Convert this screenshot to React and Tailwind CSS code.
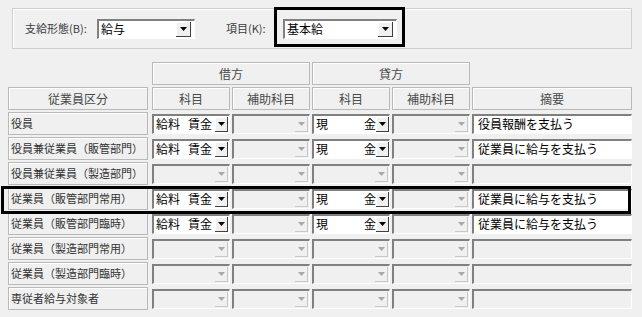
import clsx from "clsx";

const rows = [
    { label: "役員", debit: "給料賃金", credit: "現金", memo: "役員報酬を支払う" },
    { label: "役員兼従業員（販管部門）", debit: "給料賃金", credit: "現金", memo: "従業員に給与を支払う" },
    { label: "役員兼従業員（製造部門）" },
    { label: "従業員（販管部門常用）", debit: "給料賃金", credit: "現金", memo: "従業員に給与を支払う" },
    { label: "従業員（販管部門臨時）", debit: "給料賃金", credit: "現金", memo: "従業員に給与を支払う" },
    { label: "従業員（製造部門常用）" },
    { label: "従業員（製造部門臨時）" },
    { label: "専従者給与対象者" },
];

// ▼ ボタン
function Arrow({ disabled, big }) {
    return (
        <span
            className={clsx(
                "flex items-center justify-center shrink-0",
                big ? "w-[15px] h-[15px] mr-[2px]" : "w-[13px] h-[15px]",
                disabled
                    ? "border-r border-b border-[#c8c8c8]"
                    : "bg-[#f0f0f0] border-r border-b border-[#404040] shadow-[inset_1px_1px_0_#ffffff]"
            )}
        >
            <svg width="7" height="4" viewBox="0 0 7 4">
                <path d="M0 0h7L3.5 4z" fill={disabled ? "#a8a8a8" : "#000"} />
            </svg>
        </span>
    );
}

function Combo({ children, disabled, big, className }) {
    return (
        <div
            className={clsx(
                "flex items-center h-[20px] border-l-2 border-t-2 border-l-[#808080] border-t-[#808080] border-r border-b border-r-[#ffffff] border-b-[#ffffff] pl-[2px] pr-[1px]",
                disabled ? "bg-[#f0f0f0]" : "bg-white",
                className
            )}
        >
            <div className="flex-1 flex items-center text-black leading-none whitespace-pre">{children}</div>
            <Arrow disabled={disabled} big={big} />
        </div>
    );
}

function HeadCell({ children, className }) {
    return (
        <div
            className={clsx(
                "h-[23px] flex items-center justify-center bg-[#f0f0f0] border border-[#b9b9b9] shadow-[inset_1px_1px_0_#ffffff] text-[#4a4a4a]",
                className
            )}
        >
            {children}
        </div>
    );
}

export default function App() {
    return (
        <div className="relative w-[642px] h-[317px] overflow-hidden bg-[#f0f0f0] text-[12px] font-['Noto_Sans_CJK_JP','Noto_Sans_CJK_SC',sans-serif]">
            {/* 上部 */}
            <div className="ml-[12px] mt-[8px] w-[620px] h-[41px] flex items-center pl-[12px] border border-[#cfcfcf] shadow-[inset_1px_1px_0_#ffffff]">
                <span className="w-[63px] text-[11px] text-[#3c3c3c] whitespace-nowrap">支給形態(B):</span>
                <Combo big className="ml-[9px] w-[98px]">給与</Combo>
                <span className="ml-[31px] w-[40px] text-[11px] text-[#3c3c3c] whitespace-nowrap">項目(K):</span>
                <Combo big className="ml-[17px] w-[114px]">基本給</Combo>
            </div>

            {/* 明細 */}
            <div className="ml-[8px] mt-[13px] grid grid-cols-[142px_78px_78px_78px_78px_160px] gap-x-[2px] gap-y-[2px]">
                <div className="h-[23px]" />
                <HeadCell className="col-span-2">借方</HeadCell>
                <HeadCell className="col-span-2">貸方</HeadCell>
                <div />

                <HeadCell className="w-[140px]">従業員区分</HeadCell>
                <HeadCell>科目</HeadCell>
                <HeadCell>補助科目</HeadCell>
                <HeadCell>科目</HeadCell>
                <HeadCell>補助科目</HeadCell>
                <HeadCell>摘要</HeadCell>

                {rows.map((row) => (
                    <div key={row.label} className="contents">
                        <div className="w-[140px] h-[23px] flex items-center pl-[2px] bg-[#f0f0f0] border border-[#b9b9b9] shadow-[inset_1px_1px_0_#ffffff] text-[11px] text-[#333333] whitespace-nowrap">
                            {row.label}
                        </div>
                        <div className="h-[23px] flex items-center">
                            <Combo className="w-full" disabled={!row.debit}>
                                {row.debit && (
                                    <>
                                        <span>給料</span>
                                        <span className="ml-[8px]">賃金</span>
                                    </>
                                )}
                            </Combo>
                        </div>
                        <div className="h-[23px] flex items-center">
                            <Combo className="w-full" disabled />
                        </div>
                        <div className="h-[23px] flex items-center">
                            <Combo className="w-full" disabled={!row.credit}>
                                {row.credit && (
                                    <>
                                        <span>現</span>
                                        <span className="ml-[36px]">金</span>
                                    </>
                                )}
                            </Combo>
                        </div>
                        <div className="h-[23px] flex items-center">
                            <Combo className="w-full" disabled />
                        </div>
                        <div className="h-[23px] flex items-center">
                            <div
                                className={clsx(
                                    "w-full h-[20px] flex items-center pl-[4px] border-l-2 border-t-2 border-l-[#808080] border-t-[#808080] border-r border-b border-r-[#ffffff] border-b-[#ffffff] text-black leading-none",
                                    row.memo ? "bg-white" : "bg-[#f0f0f0]"
                                )}
                            >
                                {row.memo}
                            </div>
                        </div>
                    </div>
                ))}
            </div>

            {/* 強調枠 */}
            <div className="absolute left-[274px] top-[7px] w-[131px] h-[40px] border-[3px] border-black pointer-events-none" />
            <div className="absolute left-[1px] top-[186px] w-[630px] h-[28px] border-[3px] border-black pointer-events-none" />
        </div>
    );
}
